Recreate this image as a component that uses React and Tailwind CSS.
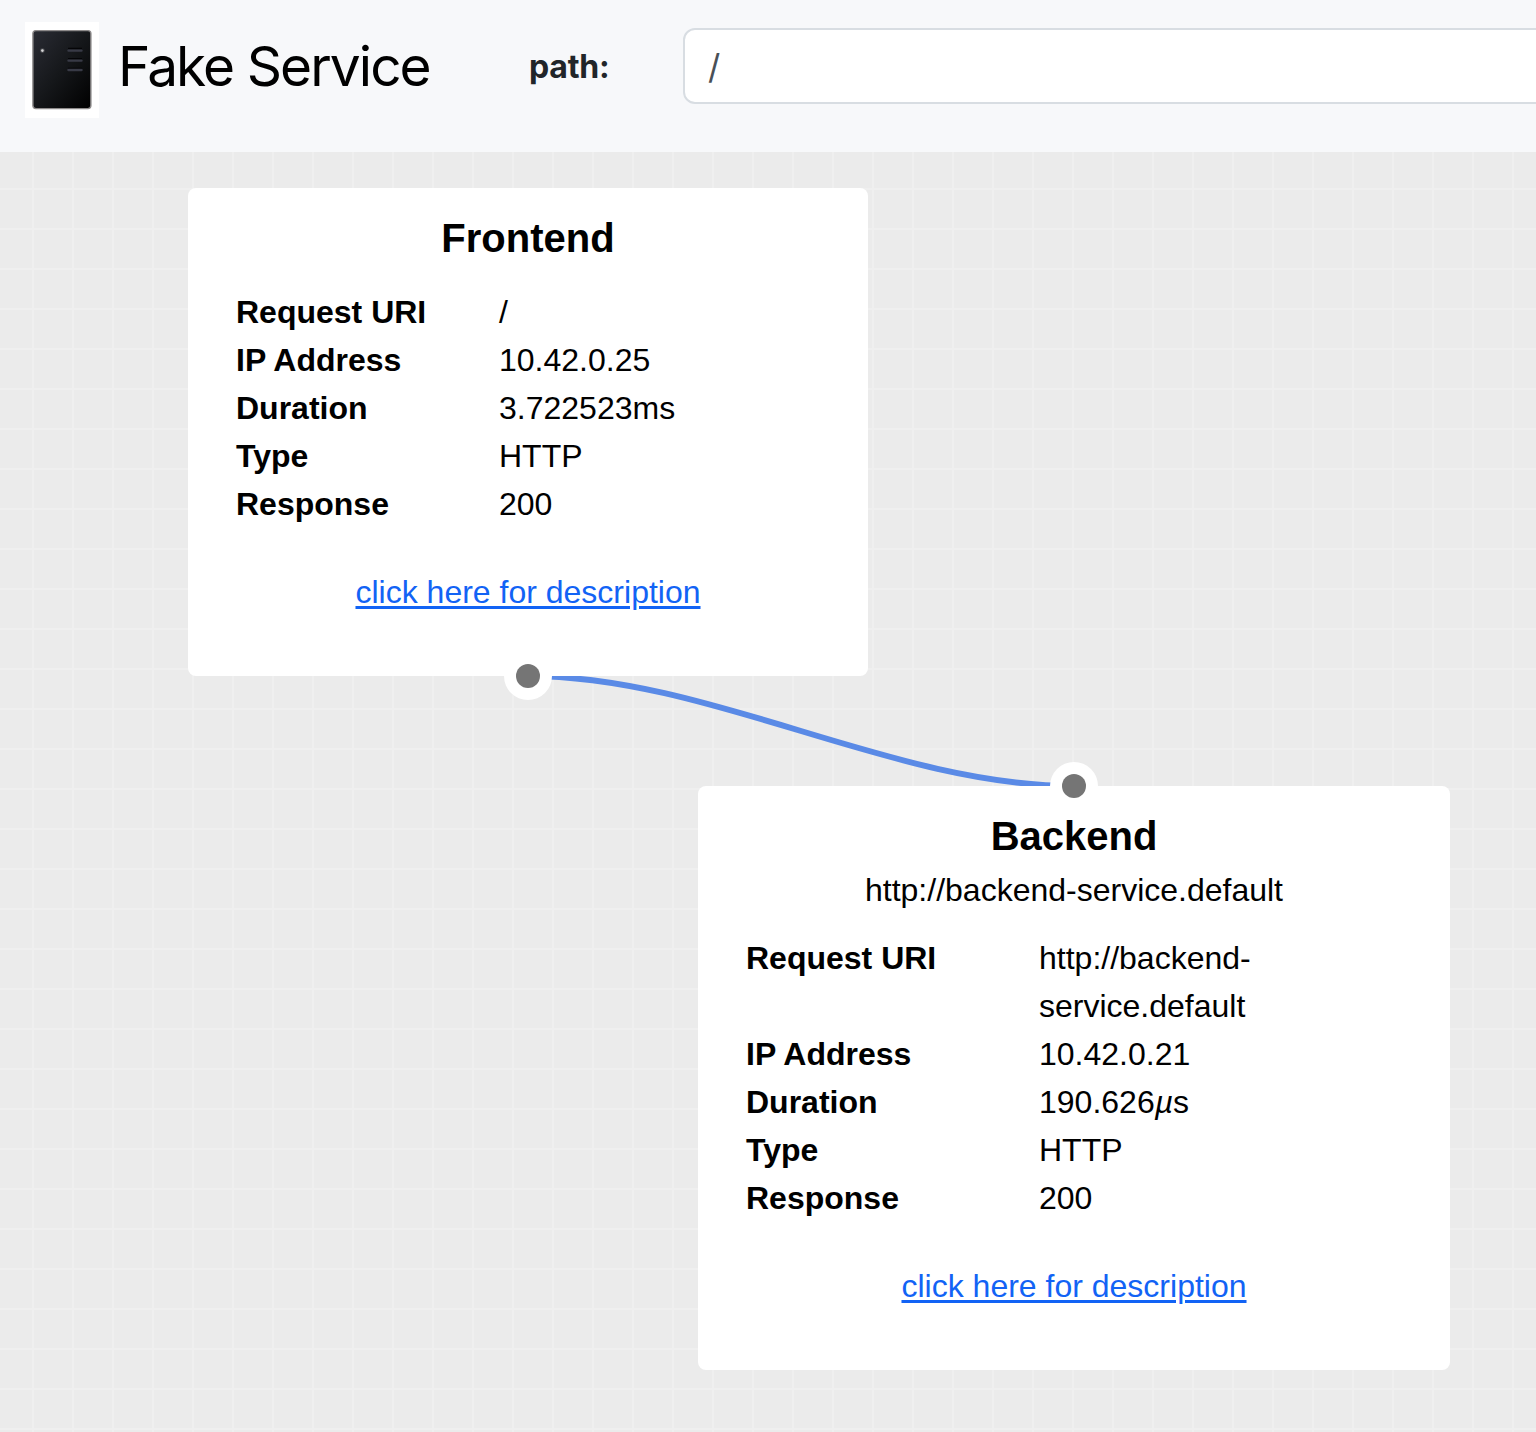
function ServerLogo() {
  return (
    <svg className="h-24 w-[74px] shrink-0" viewBox="0 0 74 96">
      <defs>
        <linearGradient id="chassis" x1="0" y1="0" x2="1" y2="1">
          <stop offset="0" stopColor="#2a2c34" />
          <stop offset="0.5" stopColor="#15171a" />
          <stop offset="1" stopColor="#000000" />
        </linearGradient>
      </defs>
      <rect width="74" height="96" fill="#ffffff" />
      <rect x="7.9" y="8.6" width="58" height="78" rx="3" fill="url(#chassis)" stroke="#8d8a8a" strokeWidth="1.4" />
      <circle cx="17.4" cy="28.6" r="2.4" fill="#4a4b50" />
      <circle cx="17.4" cy="28.6" r="1.3" fill="#d8d8d8" />
      <path d="M43 26.4H57M43 36.6H57M43 46.4H57" stroke="#050507" strokeWidth="1.2" />
      <path d="M43.5 28.6H56.5M43.5 38.6H56.5M43.5 48H56.5" stroke="#383a46" strokeWidth="2.4" strokeLinecap="round" />
    </svg>
  );
}

function Handle({ className }) {
  return (
    <span className={`absolute left-1/2 flex size-12 -translate-x-1/2 items-center justify-center rounded-full bg-white ${className}`}>
      <span className="size-6 rounded-full bg-[#757575]" />
    </span>
  );
}

function ServiceNode({ title, subtitle, rows, className, labelClass, handleClass }) {
  return (
    <article className={`absolute rounded-lg bg-white px-12 pt-5 pb-[60px] text-[32px] leading-[48px] text-black ${className}`}>
      <h2 className="text-center text-[40px] leading-[60px] font-bold">{title}</h2>
      {subtitle && <p className="text-center">{subtitle}</p>}
      <dl className="mt-5">
        {rows.map(([label, value]) => (
          <div key={label} className="flex">
            <dt className={`shrink-0 font-bold ${labelClass}`}>{label}</dt>
            <dd className="w-[230px]">{value}</dd>
          </div>
        ))}
      </dl>
      <p className="mt-10 text-center">
        <a href="#" className="text-[#1263f5] underline decoration-[3px] underline-offset-[3px]">click here for description</a>
      </p>
      <Handle className={handleClass} />
    </article>
  );
}

const frontendRows = [
  ["Request URI", "/"],
  ["IP Address", "10.42.0.25"],
  ["Duration", "3.722523ms"],
  ["Type", "HTTP"],
  ["Response", "200"],
];

const backendRows = [
  ["Request URI", "http://backend-service.default"],
  ["IP Address", "10.42.0.21"],
  ["Duration", <>190.626<span className="italic">µ</span>s</>],
  ["Type", "HTTP"],
  ["Response", "200"],
];

export default function App() {
  return (
    <div className="flex h-[1432px] w-full flex-col overflow-hidden font-['Liberation_Sans',sans-serif]">
      <header className="flex h-[152px] shrink-0 items-start overflow-hidden bg-[#f7f8fa] pl-[25px] font-['Inter',sans-serif]">
        <div className="flex w-[504px] shrink-0 pt-[22px]">
          <ServerLogo />
          <h1 className="ml-[19px] text-[55px] leading-[88px] font-normal tracking-[-1.95px] whitespace-nowrap text-black">Fake Service</h1>
        </div>
        <label className="w-[154px] shrink-0 pt-[43px] text-[32px] leading-[48px] font-bold tracking-[-0.2px] text-[#212529]">path:</label>
        <div className="mt-7 flex h-[76px] w-[1200px] shrink-0 items-center rounded-xl border-2 border-[#d8dde2] bg-white pt-px pl-[23px] text-[34px] text-[#495057]">/</div>
      </header>
      <main className="relative flex-1 bg-[#ebebeb] bg-[linear-gradient(to_right,#efefef_2px,transparent_2px),linear-gradient(to_bottom,#efefef_2px,transparent_2px)] bg-[size:40px_40px] bg-[position:32px_36px]">
        <svg className="absolute inset-0 size-full" viewBox="0 0 1536 1280" fill="none">
          <path d="M528 524C710 524 892 634 1074 634" stroke="#5a8ae6" strokeWidth="6" />
        </svg>
        <ServiceNode
          title="Frontend"
          rows={frontendRows}
          className="top-9 left-[188px] w-[680px]"
          labelClass="w-[263px]"
          handleClass="-bottom-6"
        />
        <ServiceNode
          title="Backend"
          subtitle="http://backend-service.default"
          rows={backendRows}
          className="top-[634px] left-[698px] w-[752px]"
          labelClass="w-[293px]"
          handleClass="-top-6"
        />
      </main>
    </div>
  );
}
